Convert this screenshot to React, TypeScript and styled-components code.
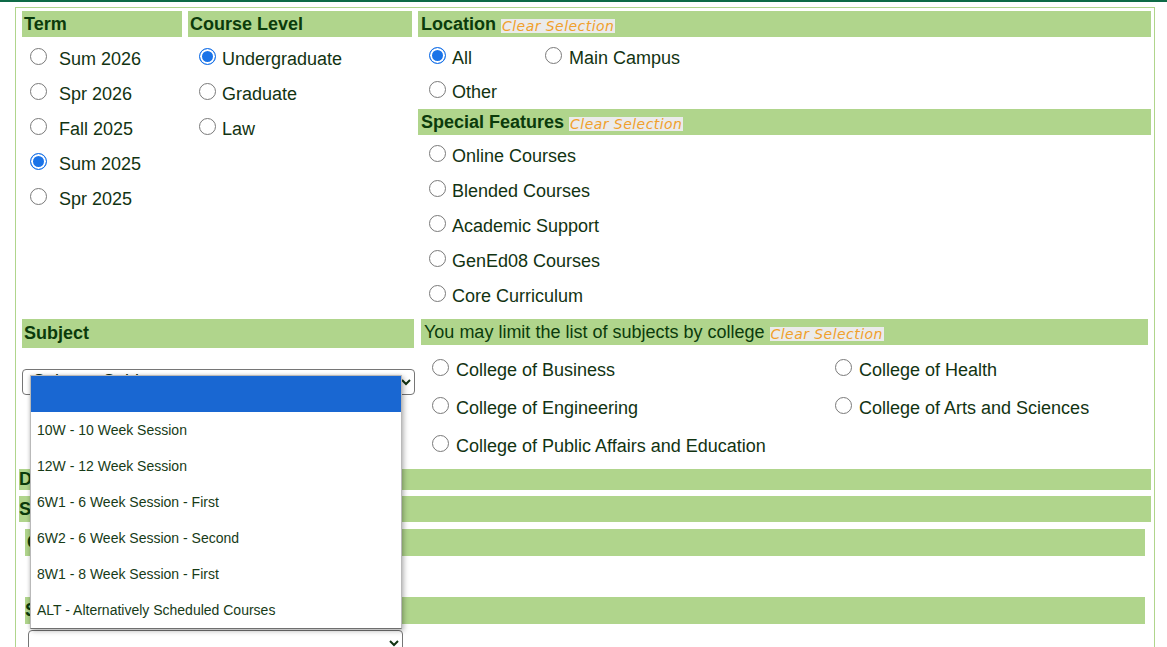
import React from "react";
import styled, { createGlobalStyle } from "styled-components";

const GlobalStyle = createGlobalStyle`
  html, body {
    margin: 0;
    padding: 0;
    background: #ffffff;
    overflow: hidden;
  }
  body {
    font-family: "Liberation Sans", Arial, sans-serif;
    color: #123312;
  }
`;

const terms = [
  { label: "Sum 2026" },
  { label: "Spr 2026" },
  { label: "Fall 2025" },
  { label: "Sum 2025", checked: true },
  { label: "Spr 2025" },
];

const levels = [
  { label: "Undergraduate", checked: true },
  { label: "Graduate" },
  { label: "Law" },
];

const features = [
  "Online Courses",
  "Blended Courses",
  "Academic Support",
  "GenEd08 Courses",
  "Core Curriculum",
];

const colleges = [
  "College of Business",
  "College of Health",
  "College of Engineering",
  "College of Arts and Sciences",
  "College of Public Affairs and Education",
];

const sessions = [
  "",
  "10W - 10 Week Session",
  "12W - 12 Week Session",
  "6W1 - 6 Week Session - First",
  "6W2 - 6 Week Session - Second",
  "8W1 - 8 Week Session - First",
  "ALT - Alternatively Scheduled Courses",
];

export default function App() {
  return (
    <>
      <GlobalStyle />
      <TopBar />
      <Frame>
        <FilterGrid>
          <div>
            <Header>Term</Header>
            <OptionList>
              {terms.map((t) => (
                <Option key={t.label} $h={35} $indent={8} $gap={12}>
                  <Radio name="term" defaultChecked={t.checked} />
                  {t.label}
                </Option>
              ))}
            </OptionList>
          </div>

          <div>
            <Header>Course Level</Header>
            <OptionList>
              {levels.map((l) => (
                <Option key={l.label} $h={35} $indent={11} $gap={6}>
                  <Radio name="level" defaultChecked={l.checked} />
                  {l.label}
                </Option>
              ))}
            </OptionList>
          </div>

          <div>
            <Header $pad={3}>
              Location <Clear>Clear Selection</Clear>
            </Header>
            <LocationGrid>
              <Option $h={34} $indent={11} $gap={6}>
                <Radio name="location" defaultChecked />
                All
              </Option>
              <Option $h={34} $indent={10} $gap={7}>
                <Radio name="location" />
                Main Campus
              </Option>
              <Option $h={34} $indent={11} $gap={6}>
                <Radio name="location" />
                Other
              </Option>
            </LocationGrid>
            <Header $pad={3}>
              Special Features <Clear>Clear Selection</Clear>
            </Header>
            <OptionList $top={4}>
              {features.map((f) => (
                <Option key={f} $h={35} $indent={11} $gap={6}>
                  <Radio name="feature" />
                  {f}
                </Option>
              ))}
            </OptionList>
          </div>
        </FilterGrid>

        <SubjectGrid>
          <div>
            <Header $h={29}>Subject</Header>
            <SubjectSelect defaultValue="">
              <option value="">Select a Subject</option>
            </SubjectSelect>
          </div>
          <div>
            <Header $bold={false} $pad={3}>
              You may limit the list of subjects by college <Clear>Clear Selection</Clear>
            </Header>
            <CollegeGrid>
              {colleges.map((c) => (
                <Option key={c} $h={38} $indent={11} $gap={7}>
                  <Radio name="college" />
                  {c}
                </Option>
              ))}
            </CollegeGrid>
          </div>
        </SubjectGrid>

        <Header $h={21} $pad={0} $gapTop={4}>
          Days
        </Header>
        <Header $pad={0} $gapTop={6}>
          Search Options
        </Header>

        <InnerBox>
          <Header $h={27} $pad={2}>
            Course Attributes
          </Header>
          <InnerSpacer />
          <Header $h={27} $pad={0}>
            Session
          </Header>
          <SelectAnchor>
            <SessionSelect defaultValue="">
              <option value=""></option>
            </SessionSelect>
            <Popup role="listbox">
              {sessions.map((s, i) => (
                <PopupItem key={i} $active={i === 0}>
                  {s}
                </PopupItem>
              ))}
            </Popup>
          </SelectAnchor>
        </InnerBox>
      </Frame>
    </>
  );
}

const TopBar = styled.div`
  height: 2px;
  background: #0e6a47;
`;

const Frame = styled.div`
  margin: 5px 12px 0 15px;
  border: 1px solid #b0d58c;
  border-bottom: none;
  padding: 3px 3px 40px 3px;
`;

const FilterGrid = styled.div`
  display: grid;
  grid-template-columns: 160px 224px 1fr;
  column-gap: 6px;
  padding-left: 3px;
`;

const Header = styled.div<{ $h?: number; $bold?: boolean; $pad?: number; $gapTop?: number }>`
  height: ${(p) => p.$h ?? 26}px;
  line-height: ${(p) => p.$h ?? 26}px;
  margin-top: ${(p) => p.$gapTop ?? 0}px;
  padding-left: ${(p) => p.$pad ?? 2}px;
  background: #b0d58c;
  color: #0b3b0b;
  font-size: 18px;
  font-weight: ${(p) => (p.$bold === false ? 400 : 700)};
  white-space: nowrap;
  overflow: hidden;
`;

const Clear = styled.span`
  display: inline-block;
  height: 14px;
  line-height: 14px;
  padding: 0 1px;
  vertical-align: -1px;
  background: #ebebeb;
  color: #f0a02c;
  font-family: "DejaVu Sans", Verdana, sans-serif;
  font-size: 14px;
  font-style: italic;
  font-weight: 400;
  letter-spacing: 0.45px;
  cursor: pointer;
`;

const OptionList = styled.div<{ $top?: number }>`
  display: flex;
  flex-direction: column;
  padding-top: ${(p) => p.$top ?? 5}px;
`;

const LocationGrid = styled.div`
  display: grid;
  grid-template-columns: 117px auto;
  justify-content: start;
  padding-top: 4px;
`;

const Option = styled.label<{ $h: number; $indent: number; $gap: number }>`
  display: flex;
  align-items: center;
  height: ${(p) => p.$h}px;
  padding-left: ${(p) => p.$indent}px;
  font-size: 18px;
  color: #123312;
  white-space: nowrap;

  input {
    margin: -6px ${(p) => p.$gap}px 0 0;
  }
`;

const Radio = styled.input.attrs({ type: "radio" })`
  appearance: none;
  flex: none;
  box-sizing: border-box;
  width: 17px;
  height: 17px;
  border: 1.5px solid #7a7a7a;
  border-radius: 50%;
  background: #ffffff;

  &:checked {
    border-color: #1a73e8;
    background: #1a73e8;
    box-shadow: inset 0 0 0 2px #ffffff;
  }
`;

const SubjectGrid = styled.div`
  display: grid;
  grid-template-columns: 392px 727px;
  column-gap: 7px;
  margin-top: 5px;
  padding-left: 3px;
`;

const SubjectSelect = styled.select`
  display: block;
  box-sizing: border-box;
  margin-top: 21px;
  width: 393px;
  height: 26px;
  padding: 0 6px 5px;
  border: 1px solid #767676;
  border-radius: 4px;
  background: #ffffff;
  color: #123312;
  font-family: "Liberation Sans", Arial, sans-serif;
  font-size: 18px;
`;

const CollegeGrid = styled.div`
  display: grid;
  grid-template-columns: 403px 1fr;
  padding-top: 6px;
`;

const InnerBox = styled.div`
  margin: 7px 6px 0 6px;
`;

const InnerSpacer = styled.div`
  height: 41px;
`;

const SelectAnchor = styled.div`
  position: relative;
  margin: 6px 0 0 3px;
  width: 375px;
`;

const SessionSelect = styled.select`
  display: block;
  box-sizing: border-box;
  width: 375px;
  height: 26px;
  border: 1px solid #767676;
  border-radius: 4px;
  background: #ffffff;
  color: #123312;
  font-family: "Liberation Sans", Arial, sans-serif;
  font-size: 18px;
`;

const Popup = styled.ul`
  position: absolute;
  left: 2px;
  bottom: calc(100% + 1px);
  z-index: 10;
  box-sizing: border-box;
  width: 372px;
  margin: 0;
  padding: 0;
  list-style: none;
  background: #ffffff;
  border: 1px solid #b9b9b9;
  border-bottom-color: #6f6f6f;
  box-shadow: 2px 2px 5px rgba(0, 0, 0, 0.28), -1px 0 3px rgba(0, 0, 0, 0.12);
`;

const PopupItem = styled.li<{ $active: boolean }>`
  height: 36px;
  line-height: 36px;
  padding-left: 6px;
  font-size: 14px;
  color: #173b17;
  white-space: nowrap;
  background: ${(p) => (p.$active ? "#1967d2" : "#ffffff")};
`;
